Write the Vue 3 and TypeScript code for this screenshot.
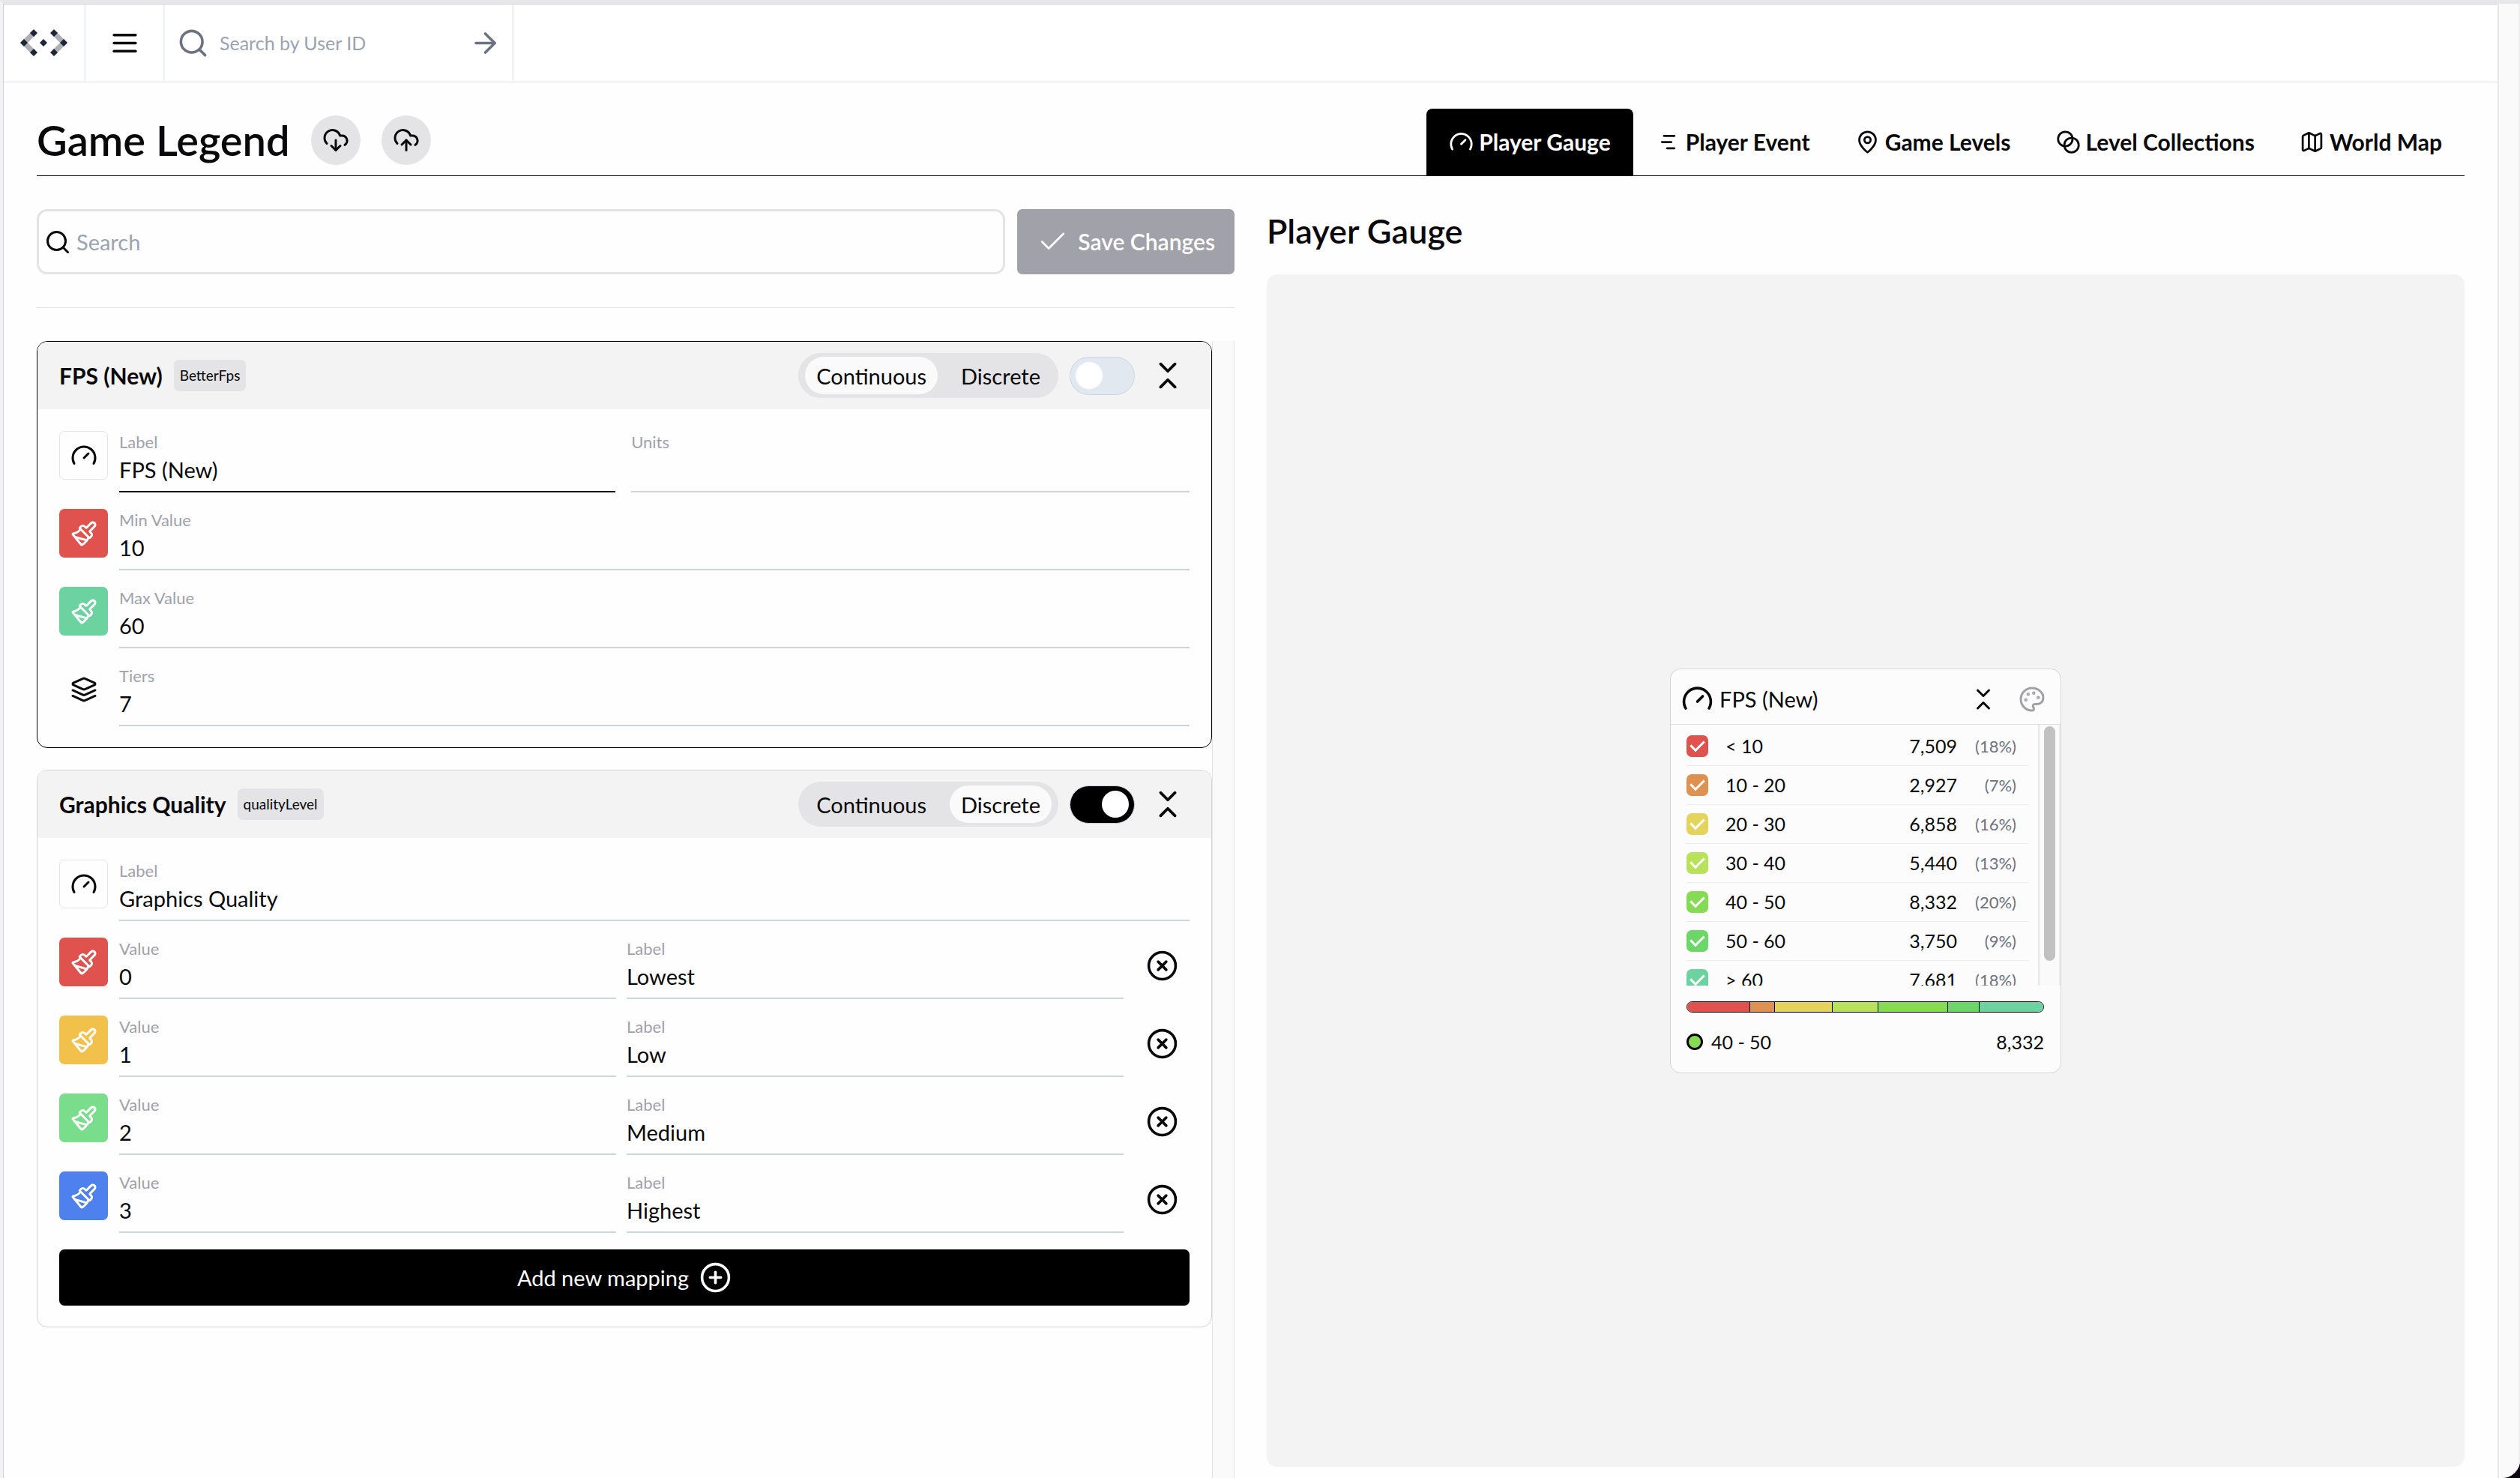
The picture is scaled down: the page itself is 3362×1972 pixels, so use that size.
<script setup lang="ts">
import { ref, reactive, computed, h, type FunctionalComponent } from 'vue'

type Shape = [string, Record<string, string | number>]
const p = (d: string): Shape => ['path', { d }]
const c = (cx: number, cy: number, r: number, fill = 'none'): Shape => ['circle', { cx, cy, r, fill }]

const shapes: Record<string, Shape[]> = {
  menu: [p('M4 6h16'), p('M4 12h16'), p('M4 18h16')],
  search: [c(11, 11, 8), p('m21 21-4.3-4.3')],
  arrow: [p('M5 12h14'), p('m12 5 7 7-7 7')],
  check: [p('M20 6 9 17l-5-5')],
  download: [p('M4 14.899A7 7 0 1 1 15.71 8h1.79a4.5 4.5 0 0 1 2.5 8.242'), p('M12 12v9'), p('m8 17 4 4 4-4')],
  upload: [p('M4 14.899A7 7 0 1 1 15.71 8h1.79a4.5 4.5 0 0 1 2.5 8.242'), p('M12 12v9'), p('m16 16-4-4-4 4')],
  gauge: [p('m12 14 4-4'), p('M3.34 19a10 10 0 1 1 17.32 0')],
  event: [p('M8 6h10'), p('M6 12h9'), p('M11 18h7')],
  pin: [p('M20 10c0 6-8 12-8 12s-8-6-8-12a8 8 0 0 1 16 0Z'), c(12, 10, 3)],
  blend: [c(9, 9, 7), c(15, 15, 7)],
  map: [
    p('M14.106 5.553a2 2 0 0 0 1.788 0l3.659-1.83A1 1 0 0 1 21 4.619v12.764a1 1 0 0 1-.553.894l-4.553 2.277a2 2 0 0 1-1.788 0l-4.212-2.106a2 2 0 0 0-1.788 0l-3.659 1.83A1 1 0 0 1 3 19.381V6.618a1 1 0 0 1 .553-.894l4.553-2.277a2 2 0 0 1 1.788 0z'),
    p('M15 5.764v15'),
    p('M9 3.236v15'),
  ],
  collapse: [p('m7 20 5-5 5 5'), p('m7 4 5 5 5-5')],
  brush: [
    p('m14.622 17.897-10.68-2.913'),
    p('M18.376 2.622a1 1 0 1 1 3.002 3.002L17.36 9.643a.5.5 0 0 0 0 .707l.944.944a2.41 2.41 0 0 1 0 3.408l-.944.944a.5.5 0 0 1-.707 0L8.354 7.348a.5.5 0 0 1 0-.707l.944-.944a2.41 2.41 0 0 1 3.408 0l.944.944a.5.5 0 0 0 .707 0z'),
    p('M9 8c-1.804 2.71-3.97 3.46-6.583 3.948a.507.507 0 0 0-.302.819l7.32 8.883a1 1 0 0 0 1.185.204C12.735 20.405 16 16.792 16 15'),
  ],
  layers: [
    p('m12.83 2.18a2 2 0 0 0-1.66 0L2.6 6.08a1 1 0 0 0 0 1.83l8.58 3.91a2 2 0 0 0 1.66 0l8.58-3.9a1 1 0 0 0 0-1.83Z'),
    p('m22 17.65-9.17 4.16a2 2 0 0 1-1.66 0L2 17.65'),
    p('m22 12.65-9.17 4.16a2 2 0 0 1-1.66 0L2 12.65'),
  ],
  remove: [c(12, 12, 10), p('m15 9-6 6'), p('m9 9 6 6')],
  add: [c(12, 12, 10), p('M8 12h8'), p('M12 8v8')],
  palette: [
    c(13.5, 6.5, 0.5, 'currentColor'),
    c(17.5, 10.5, 0.5, 'currentColor'),
    c(8.5, 7.5, 0.5, 'currentColor'),
    c(6.5, 12.5, 0.5, 'currentColor'),
    p('M12 2C6.5 2 2 6.5 2 12s4.5 10 10 10c.926 0 1.648-.746 1.648-1.688 0-.437-.18-.835-.437-1.125-.29-.289-.438-.652-.438-1.125a1.64 1.64 0 0 1 1.668-1.668h1.996c3.051 0 5.555-2.503 5.555-5.554C21.965 6.012 17.461 2 12 2z'),
  ],
}

const Icon: FunctionalComponent<{ name: string; size: number; weight?: number }> = (props) =>
  h(
    'svg',
    {
      width: props.size,
      height: props.size,
      viewBox: '0 0 24 24',
      fill: 'none',
      stroke: 'currentColor',
      'stroke-width': props.weight ?? 2,
      'stroke-linecap': 'round',
      'stroke-linejoin': 'round',
      'aria-hidden': 'true',
      style: 'display:block;flex:none',
    },
    shapes[props.name].map(([tag, attrs]) => h(tag, attrs)),
  )
Icon.props = ['name', 'size', 'weight']

interface Field { label: string; value: string; wide?: boolean }
interface Row { icon: string; color?: string; fields: Field[]; removable?: boolean }
interface Legend {
  id: string
  title: string
  mode: 'Continuous' | 'Discrete'
  enabled: boolean
  active: boolean
  rows: Row[]
}

const tabs = [
  { icon: 'gauge', text: 'Player Gauge' },
  { icon: 'event', text: 'Player Event' },
  { icon: 'pin', text: 'Game Levels' },
  { icon: 'blend', text: 'Level Collections' },
  { icon: 'map', text: 'World Map' },
]
const activeTab = ref('Player Gauge')
const modes = ['Continuous', 'Discrete'] as const

const mapping = (color: string, value: string, label: string): Row => ({
  icon: 'brush',
  color,
  removable: true,
  fields: [{ label: 'Value', value }, { label: 'Label', value: label }],
})

const legends = reactive<Legend[]>([
  {
    id: 'BetterFps',
    title: 'FPS (New)',
    mode: 'Continuous',
    enabled: false,
    active: true,
    rows: [
      { icon: 'gauge', fields: [{ label: 'Label', value: 'FPS (New)' }, { label: 'Units', value: '', wide: true }] },
      { icon: 'brush', color: '#df524e', fields: [{ label: 'Min Value', value: '10' }] },
      { icon: 'brush', color: '#6cd2a0', fields: [{ label: 'Max Value', value: '60' }] },
      { icon: 'layers', fields: [{ label: 'Tiers', value: '7' }] },
    ],
  },
  {
    id: 'qualityLevel',
    title: 'Graphics Quality',
    mode: 'Discrete',
    enabled: true,
    active: false,
    rows: [
      { icon: 'gauge', fields: [{ label: 'Label', value: 'Graphics Quality' }] },
      mapping('#df524e', '0', 'Lowest'),
      mapping('#f2c14b', '1', 'Low'),
      mapping('#7add8b', '2', 'Medium'),
      mapping('#4f81ee', '3', 'Highest'),
    ],
  },
])

const tiers = reactive([
  { name: '< 10', count: 7509, color: '#df524e', on: true },
  { name: '10 - 20', count: 2927, color: '#de9150', on: true },
  { name: '20 - 30', count: 6858, color: '#e4d45b', on: true },
  { name: '30 - 40', count: 5440, color: '#b9e25b', on: true },
  { name: '40 - 50', count: 8332, color: '#85dc54', on: true },
  { name: '50 - 60', count: 3750, color: '#6dd668', on: true },
  { name: '> 60', count: 7681, color: '#6cd2a0', on: true },
])
const total = computed(() => tiers.reduce((sum, t) => sum + t.count, 0))
const percent = (n: number) => `(${Math.round((n / total.value) * 100)}%)`
const format = (n: number) => n.toLocaleString('en-US')
const hovered = computed(() => tiers[4])
</script>

<template>
  <div class="desktop">
    <div class="window">
      <div class="page">
        <header class="topbar">
          <a class="cell logo" href="#" aria-label="Home">
            <svg width="63" height="36" viewBox="0 0 63 36" aria-hidden="true">
              <g fill="none" stroke="#aeb1b4" stroke-width="7">
                <path d="M18 5 5 18l13 13" />
                <path d="m45 5 13 13-13 13" />
              </g>
              <path
                fill="#1e2538"
                d="m18 0 5 5-5 5-5-5zM5 13l5 5-5 5-5-5zM18 26l5 5-5 5-5-5zM45 0l5 5-5 5-5-5zM58 13l5 5-5 5-5-5zM45 26l5 5-5 5-5-5zM31 13l5 5-5 5-5-5z"
              />
            </svg>
          </a>
          <button class="cell menu" type="button" aria-label="Menu"><Icon name="menu" :size="43" /></button>
          <form class="cell user-search" @submit.prevent>
            <Icon name="search" :size="43" />
            <input type="text" placeholder="Search by User ID" aria-label="Search by User ID" />
            <button type="submit" aria-label="Go"><Icon name="arrow" :size="43" /></button>
          </form>
        </header>

        <main class="main">
          <div class="heading">
            <div class="heading-left">
              <h1>Game Legend</h1>
              <button class="round" type="button" aria-label="Download"><Icon name="download" :size="36" /></button>
              <button class="round" type="button" aria-label="Upload"><Icon name="upload" :size="36" /></button>
            </div>
            <nav class="tabs">
              <button
                v-for="t in tabs"
                :key="t.text"
                type="button"
                class="tab"
                :class="{ active: activeTab === t.text }"
                @click="activeTab = t.text"
              >
                <Icon :name="t.icon" :size="33" />{{ t.text }}
              </button>
            </nav>
          </div>

          <div class="columns">
            <section class="editor">
              <div class="tools">
                <label class="search">
                  <Icon name="search" :size="36" />
                  <input type="text" placeholder="Search" aria-label="Search" />
                </label>
                <button class="save" type="button"><Icon name="check" :size="43" :weight="1.5" />Save Changes</button>
              </div>
              <hr />
              <div class="scroller">
                <div class="cards">
                  <article v-for="l in legends" :key="l.id" class="card" :class="{ active: l.active }">
                    <div class="card-head">
                      <h2>{{ l.title }}</h2>
                      <span class="badge">{{ l.id }}</span>
                      <div class="segments">
                        <button
                          v-for="m in modes"
                          :key="m"
                          type="button"
                          :class="{ selected: l.mode === m }"
                          @click="l.mode = m"
                        >
                          {{ m }}
                        </button>
                      </div>
                      <input v-model="l.enabled" class="switch" type="checkbox" :aria-label="`Enable ${l.title}`" />
                      <button class="fold" type="button" aria-label="Collapse"><Icon name="collapse" :size="46" /></button>
                    </div>
                    <div class="card-body">
                      <div v-for="(r, ri) in l.rows" :key="ri" class="row">
                        <span v-if="r.icon === 'layers'" class="swatch bare"><Icon name="layers" :size="36" /></span>
                        <button
                          v-else
                          type="button"
                          class="swatch"
                          :class="{ filled: r.color }"
                          :style="r.color ? { background: r.color } : undefined"
                          :aria-label="r.color ? 'Pick color' : 'Pick icon'"
                        >
                          <Icon :name="r.icon" :size="36" />
                        </button>
                        <div class="fields" :class="{ spaced: !r.removable }">
                          <label
                            v-for="(f, fi) in r.fields"
                            :key="f.label"
                            class="field"
                            :class="{ wide: f.wide, focused: l.active && ri === 0 && fi === 0 }"
                          >
                            <span>{{ f.label }}</span>
                            <input v-model="f.value" type="text" />
                          </label>
                        </div>
                        <button v-if="r.removable" class="remove" type="button" aria-label="Remove mapping">
                          <Icon name="remove" :size="43" />
                        </button>
                      </div>
                      <button v-if="l.mode === 'Discrete'" class="add" type="button">
                        Add new mapping<Icon name="add" :size="43" />
                      </button>
                    </div>
                  </article>
                </div>
                <div class="track"></div>
              </div>
            </section>

            <section class="preview">
              <h2>Player Gauge</h2>
              <div class="stage">
                <div class="widget">
                  <div class="widget-head">
                    <Icon name="gauge" :size="43" />
                    <h3>FPS (New)</h3>
                    <button type="button" aria-label="Collapse"><Icon name="collapse" :size="36" /></button>
                    <button type="button" class="muted" aria-label="Colors"><Icon name="palette" :size="36" /></button>
                  </div>
                  <div class="list">
                    <div class="list-body">
                      <table>
                        <tbody>
                          <tr v-for="t in tiers" :key="t.name">
                            <td class="tick">
                              <input v-model="t.on" type="checkbox" :aria-label="t.name" :style="{ background: t.color }" />
                            </td>
                            <td>{{ t.name }}</td>
                            <td class="num">{{ format(t.count) }}</td>
                            <td class="pct">{{ percent(t.count) }}</td>
                          </tr>
                        </tbody>
                      </table>
                    </div>
                    <div class="list-track"><div class="thumb"></div></div>
                  </div>
                  <div class="bar">
                    <span v-for="t in tiers" :key="t.name" :style="{ flexGrow: t.count, background: t.color }"></span>
                  </div>
                  <div class="legend">
                    <span class="dot" :style="{ background: hovered.color }"></span>
                    <span>{{ hovered.name }}</span>
                    <span class="legend-value">{{ format(hovered.count) }}</span>
                  </div>
                </div>
              </div>
            </section>
          </div>
        </main>
      </div>
      <div class="page-track"></div>
    </div>
  </div>
</template>

<style>
body {
  margin: 0;
}
</style>

<style scoped>
* {
  box-sizing: border-box;
}
.desktop {
  height: 100vh;
  background: #0d0714;
  color: #09090b;
  font-family: Lato, 'Liberation Sans', sans-serif;
  font-size: 29px;
  line-height: 35px;
}
.window {
  height: 100%;
  display: flex;
  overflow: hidden;
  border-top: 5px solid #e7e7e9;
  border-left: 4px solid #f3f3f5;
  border-bottom-right-radius: 24px;
  background: #fefefe;
}
.page {
  flex: 1;
  min-width: 0;
  display: flex;
  flex-direction: column;
  border-top: 1px solid #cfcfd1;
  border-left: 1px solid #cfcfd1;
}
.page-track {
  flex: none;
  width: 30px;
  background: #fafafa;
  border-left: 2px solid #e6e6e6;
  border-right: 2px solid #eeeeee;
}
h1,
h2,
h3 {
  margin: 0;
  font-weight: 600;
}
button,
input {
  font: inherit;
  color: inherit;
  border: 0;
  padding: 0;
  margin: 0;
  background: none;
  border-radius: 0;
  outline: 0;
}
button {
  cursor: pointer;
}
input::placeholder {
  color: #9ca3af;
  opacity: 1;
}

.topbar {
  flex: none;
  height: 105px;
  display: flex;
  background: #ffffff;
  border-bottom: 3px solid #f3f4f6;
}
.cell {
  display: flex;
  align-items: center;
  justify-content: center;
  border-right: 3px solid #f3f4f6;
}
.logo {
  width: 110px;
}
.menu {
  width: 105px;
}
.user-search {
  width: 466px;
  gap: 14px;
  padding: 0 14px 0 16px;
  color: #6b7280;
  font-size: 25px;
}
.user-search input {
  flex: 1;
  min-width: 0;
  height: 43px;
}

.main {
  flex: 1;
  min-height: 0;
  display: flex;
  flex-direction: column;
  padding: 34px 44px 0;
}
.heading {
  flex: none;
  display: flex;
  justify-content: space-between;
  align-items: flex-end;
  border-bottom: 1px solid #000000;
}
.heading-left {
  display: flex;
  align-items: center;
  gap: 28px;
  padding-bottom: 14px;
}
h1 {
  font-size: 56px;
  line-height: 66px;
}
.round {
  width: 66px;
  height: 66px;
  display: grid;
  place-items: center;
  border-radius: 50%;
  background: #e4e4e6;
}
.tabs {
  display: flex;
}
.tab {
  height: 89px;
  display: flex;
  align-items: center;
  gap: 7px;
  padding: 0 30px;
  border-radius: 8px 8px 0 0;
  font-size: 30px;
  font-weight: 700;
}
.tab.active {
  background: #000000;
  color: #ffffff;
}

.columns {
  flex: 1;
  min-height: 0;
  display: grid;
  grid-template-columns: minmax(0, 1fr) minmax(0, 1fr);
  gap: 43px;
  padding-top: 44px;
}
.editor {
  display: flex;
  flex-direction: column;
  min-height: 0;
}
.tools {
  display: flex;
  gap: 16px;
}
.search {
  flex: 1;
  height: 87px;
  display: flex;
  align-items: center;
  gap: 7px;
  padding: 0 7px;
  border: 3px solid #e4e4e6;
  border-radius: 14px;
}
.search input {
  flex: 1;
  min-width: 0;
}
.save {
  display: flex;
  align-items: center;
  gap: 12px;
  padding: 0 26px;
  border-radius: 7px;
  background: #a1a1aa;
  color: #ffffff;
  font-size: 30px;
  font-weight: 600;
}
hr {
  width: 100%;
  height: 1px;
  margin: 44px 0;
  border: 0;
  background: #e4e4e6;
}
.scroller {
  flex: 1;
  min-height: 0;
  display: flex;
  overflow: hidden;
}
.cards {
  flex: 1;
  min-width: 0;
  display: flex;
  flex-direction: column;
  gap: 29px;
}
.track {
  flex: none;
  width: 30px;
  background: #fafafa;
  border-left: 1px solid #e6e6e6;
  border-right: 1px solid #e6e6e6;
}
.card {
  flex: none;
  overflow: hidden;
  border: 1px solid #d4d4d8;
  border-radius: 14px;
}
.card.active {
  border-color: #000000;
}
.card-head {
  height: 90px;
  display: flex;
  align-items: center;
  gap: 15px;
  padding: 0 29px;
  background: #f3f3f3;
}
.card-head h2 {
  font-size: 30px;
  font-weight: 700;
}
.badge {
  padding: 8px;
  border-radius: 7px;
  background: #e4e4e6;
  font-size: 19px;
  line-height: 26px;
}
.segments {
  display: flex;
  gap: 16px;
  margin-left: auto;
  padding: 5px 9px;
  border-radius: 30px;
  background: #e4e4e6;
}
.segments button {
  height: 50px;
  padding: 0 15px;
  border-radius: 25px;
}
.segments .selected {
  background: #fafafa;
}
.switch {
  appearance: none;
  width: 87px;
  height: 51px;
  display: flex;
  align-items: center;
  padding: 0 7px;
  border: 1px solid #cbd5e1;
  border-radius: 26px;
  background: #e2e8f0;
}
.switch::before {
  content: '';
  width: 36px;
  height: 36px;
  border-radius: 50%;
  background: #ffffff;
}
.switch:checked {
  justify-content: flex-end;
  background: #000000;
}
.fold {
  width: 58px;
  display: grid;
  place-items: center;
}
.card-body {
  display: flex;
  flex-direction: column;
  gap: 22px;
  padding: 29px 29px 28px;
}
.row {
  display: flex;
  align-items: flex-start;
}
.swatch {
  flex: none;
  width: 65px;
  height: 65px;
  display: grid;
  place-items: center;
  margin-right: 15px;
  border: 1px solid #e4e4e7;
  border-radius: 7px;
}
.swatch.filled {
  border: 0;
  color: #ffffff;
}
.swatch.bare {
  border: 0;
}
.fields {
  flex: 1;
  min-width: 0;
  display: flex;
  gap: 14px;
}
.fields.spaced {
  gap: 21px;
}
.field {
  flex: 8 1 0;
  min-width: 0;
  height: 82px;
  padding-top: 2px;
  border-bottom: 2px solid #cbd5e1;
}
.field.wide {
  flex-grow: 9;
}
.field.focused {
  border-color: #000000;
}
.field span {
  display: block;
  color: #a1a1aa;
  font-size: 22px;
  line-height: 26px;
}
.field input {
  display: block;
  width: 100%;
  height: 46px;
}
.remove {
  flex: none;
  width: 74px;
  height: 74px;
  margin-left: 14px;
  display: grid;
  place-items: center;
}
.add {
  height: 75px;
  display: flex;
  align-items: center;
  justify-content: center;
  gap: 14px;
  border-radius: 7px;
  background: #000000;
  color: #ffffff;
}

.preview {
  display: flex;
  flex-direction: column;
  gap: 29px;
  padding-bottom: 15px;
}
.preview h2 {
  font-size: 45px;
  line-height: 58px;
}
.stage {
  flex: 1;
  display: grid;
  place-items: center;
  border-radius: 14px;
  background: #f3f3f3;
}
.widget {
  width: 522px;
  overflow: hidden;
  border: 1px solid #d4d4d8;
  border-radius: 14px;
  background: #fcfcfc;
}
.widget-head {
  height: 74px;
  display: flex;
  align-items: center;
  padding: 7px 20px 0 14px;
  border-bottom: 1px solid #e0e0e2;
}
.widget-head h3 {
  flex: 1;
  margin-left: 8px;
  font-size: 29px;
  font-weight: 400;
}
.widget-head button {
  margin-left: 29px;
}
.muted {
  color: #a1a1aa;
}
.list {
  height: 348px;
  display: flex;
  overflow: hidden;
  font-size: 25px;
}
.list-body {
  flex: 1;
  padding: 3px 13px 0 21px;
}
table {
  width: 100%;
  border-collapse: collapse;
}
tr {
  height: 52px;
  border-bottom: 1px solid #ececee;
}
td {
  padding: 0;
}
.tick {
  width: 52px;
}
.tick input {
  appearance: none;
  display: grid;
  place-items: center;
  width: 29px;
  height: 29px;
  border-radius: 7px;
}
.tick input:checked::after {
  content: '';
  width: 8px;
  height: 15px;
  margin-bottom: 5px;
  border: solid #ffffff;
  border-width: 0 3px 3px 0;
  transform: rotate(45deg);
}
.num {
  text-align: right;
}
.pct {
  width: 95px;
  padding-right: 16px;
  text-align: right;
  color: #6b7280;
  font-size: 22px;
}
.list-track {
  flex: none;
  width: 30px;
  padding: 2px 5px 0 6px;
  border-left: 2px solid #e6e6e6;
  border-right: 2px solid #eeeeee;
  background: #fafafa;
}
.thumb {
  height: 313px;
  border-radius: 8px;
  background: #c1c1c1;
}
.bar {
  height: 15px;
  display: flex;
  margin: 21px 22px 0 21px;
  overflow: hidden;
  border: 1px solid #000000;
  border-radius: 8px;
}
.bar span {
  flex-basis: 0;
  border-right: 1px solid #000000;
}
.bar span:last-child {
  border-right: 0;
}
.legend {
  display: flex;
  align-items: center;
  gap: 11px;
  padding: 22px 22px 23px 21px;
  font-size: 25px;
}
.dot {
  width: 22px;
  height: 22px;
  border: 3px solid #000000;
  border-radius: 50%;
}
.legend-value {
  margin-left: auto;
}
</style>
